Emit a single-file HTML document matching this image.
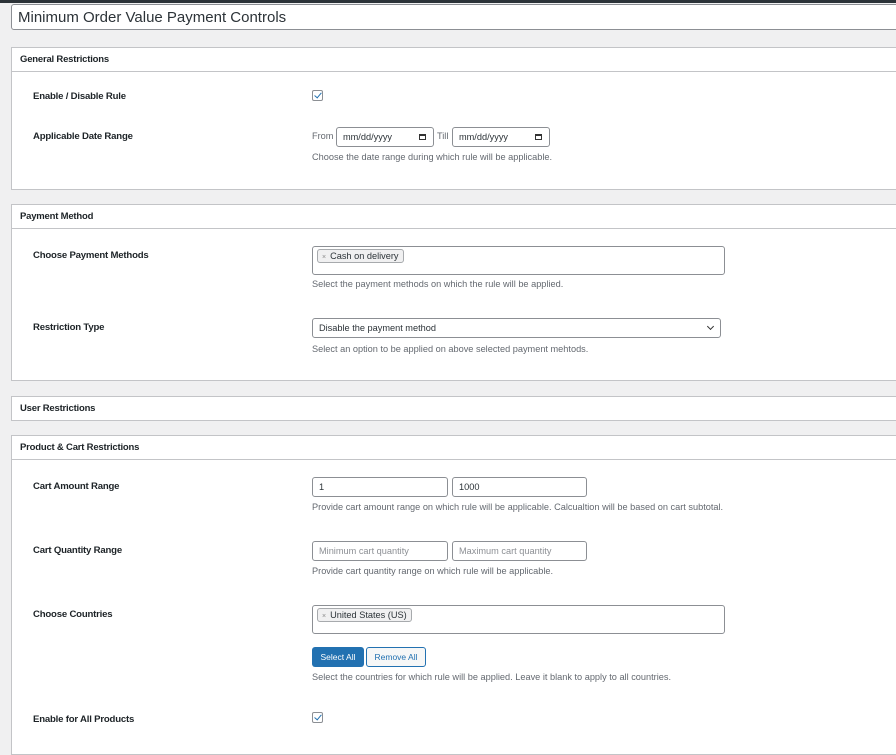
<!DOCTYPE html>
<html><head><meta charset="utf-8"><style>
*{box-sizing:border-box;margin:0;padding:0}
body{width:896px;height:746px;overflow:hidden;background:#f0f0f1;font-family:"Liberation Sans",sans-serif;color:#1d2327;position:relative}
.a{position:absolute}
.top{left:0;top:0;width:896px;height:3px;background:#2c3338}
.title{left:11px;top:4px;width:900px;height:26px;background:#fff;border:1px solid #8c8f94;border-radius:3px;font-size:15px;padding:4px 6px;color:#2c3338}
.panel{left:11px;width:900px;background:#fff;border:1px solid #c3c4c7}
.ph{height:24px;border-bottom:1px solid #c3c4c7;font-size:9.5px;font-weight:bold;padding:6px 8px;letter-spacing:-.2px}
.lbl{font-size:9.6px;font-weight:bold;letter-spacing:-.2px;left:33px}
.d{font-size:9.2px;color:#646970;left:312px}
.in{background:#fff;border:1px solid #8c8f94;border-radius:3px;font-size:9.2px;padding:4px 6px;color:#2c3338;height:20px}
.ph2{color:#8c8f94}
.cb{width:11px;height:11px;border:1px solid #8c8f94;border-radius:2px;background:#fff}
.cb:after{content:"";position:absolute;left:3px;top:0px;width:3px;height:6px;border:solid #2271b1;border-width:0 1.5px 1.5px 0;transform:rotate(40deg)}
.tag{background:#f0f0f1;border:1px solid #a7aaad;border-radius:3px;font-size:9.2px;padding:1px 4px;color:#2c3338}
.tag b{font-weight:normal;color:#888;font-size:7px;margin-right:4px}
</style></head><body>
<div class="a top"></div>
<div class="a title">Minimum Order Value Payment Controls</div>

<div class="a panel" style="top:47px;height:143px"><div class="ph">General Restrictions</div></div>
<div class="a lbl" style="top:91px">Enable / Disable Rule</div>
<div class="a cb" style="left:312px;top:90px"></div>
<div class="a lbl" style="top:131px">Applicable Date Range</div>
<div class="a" style="left:312px;top:131px;font-size:9.2px;color:#646970">From</div>
<div class="a in" style="left:336px;top:127px;width:98px">mm/dd/yyyy<span style="position:absolute;right:7px;top:6px;width:7px;height:6px;border:1.5px solid #333;border-top-width:2.5px"></span></div>
<div class="a" style="left:437px;top:131px;font-size:9.2px;color:#646970">Till</div>
<div class="a in" style="left:452px;top:127px;width:98px">mm/dd/yyyy<span style="position:absolute;right:7px;top:6px;width:7px;height:6px;border:1.5px solid #333;border-top-width:2.5px"></span></div>
<div class="a d" style="top:152px">Choose the date range during which rule will be applicable.</div>

<div class="a panel" style="top:204px;height:177px"><div class="ph">Payment Method</div></div>
<div class="a lbl" style="top:250px">Choose Payment Methods</div>
<div class="a in" style="left:312px;top:246px;width:413px;height:29px;padding:4px"><span class="tag"><b>×</b>Cash on delivery</span></div>
<div class="a d" style="top:279px">Select the payment methods on which the rule will be applied.</div>
<div class="a lbl" style="top:322px">Restriction Type</div>
<div class="a in" style="left:312px;top:318px;width:409px">Disable the payment method<span style="position:absolute;right:7px;top:5px;width:5px;height:5px;border:solid #333;border-width:0 1.3px 1.3px 0;transform:rotate(45deg)"></span></div>
<div class="a d" style="top:344px">Select an option to be applied on above selected payment mehtods.</div>

<div class="a panel" style="top:396px;height:25px"><div class="ph" style="border:0">User Restrictions</div></div>

<div class="a panel" style="top:435px;height:320px"><div class="ph">Product &amp; Cart Restrictions</div></div>
<div class="a lbl" style="top:481px">Cart Amount Range</div>
<div class="a in" style="left:312px;top:477px;width:136px">1</div>
<div class="a in" style="left:452px;top:477px;width:135px">1000</div>
<div class="a d" style="top:502px">Provide cart amount range on which rule will be applicable. Calcualtion will be based on cart subtotal.</div>
<div class="a lbl" style="top:545px">Cart Quantity Range</div>
<div class="a in ph2" style="left:312px;top:541px;width:136px">Minimum cart quantity</div>
<div class="a in ph2" style="left:452px;top:541px;width:135px">Maximum cart quantity</div>
<div class="a d" style="top:566px">Provide cart quantity range on which rule will be applicable.</div>
<div class="a lbl" style="top:609px">Choose Countries</div>
<div class="a in" style="left:312px;top:605px;width:413px;height:29px;padding:4px"><span class="tag"><b>×</b>United States (US)</span></div>
<div class="a" style="left:312px;top:647px;width:52px;height:20px;background:#2271b1;border-radius:3px;color:#fff;font-size:8.5px;text-align:center;line-height:20px">Select All</div>
<div class="a" style="left:366px;top:647px;width:60px;height:20px;background:#f6f7f7;border:1px solid #2271b1;border-radius:3px;color:#2271b1;font-size:8.5px;text-align:center;line-height:18px">Remove All</div>
<div class="a d" style="top:672px">Select the countries for which rule will be applied. Leave it blank to apply to all countries.</div>
<div class="a lbl" style="top:714px">Enable for All Products</div>
<div class="a cb" style="left:312px;top:712px"></div>
</body></html>
